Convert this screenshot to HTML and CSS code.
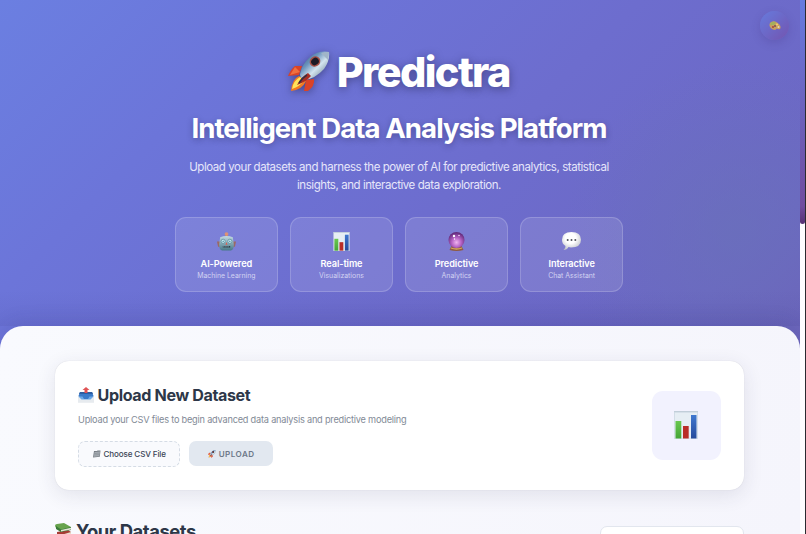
FILE: index.html
```html
<!DOCTYPE html>
<html lang="en">
<head>
<meta charset="utf-8">
<title>Predictra</title>
<link rel="stylesheet" href="styles.css">
</head>
<body>
<svg class="defs" width="0" height="0" aria-hidden="true">
  <defs>
    <linearGradient id="hull" x1="0" y1="0" x2="1" y2="1"><stop offset="0" stop-color="#34546d"/><stop offset=".35" stop-color="#6993bd"/><stop offset=".58" stop-color="#d3e4ee"/><stop offset="1" stop-color="#496579"/></linearGradient>
    <linearGradient id="green" x1="0" y1="0" x2="0" y2="1"><stop offset="0" stop-color="#6ac850"/><stop offset="1" stop-color="#45a536"/></linearGradient>
    <linearGradient id="blue" x1="0" y1="0" x2="0" y2="1"><stop offset="0" stop-color="#3f78cf"/><stop offset="1" stop-color="#264a9c"/></linearGradient>
    <radialGradient id="orb" cx=".5" cy=".65" r=".6"><stop offset="0" stop-color="#f0b4f0"/><stop offset=".5" stop-color="#b562c4"/><stop offset="1" stop-color="#642b7c"/></radialGradient>
    <radialGradient id="bubble" cx=".45" cy=".35" r=".7"><stop offset=".4" stop-color="#fff"/><stop offset="1" stop-color="#b9bcc2"/></radialGradient>
    <linearGradient id="bot" x1="0" y1="0" x2="0" y2="1"><stop offset="0" stop-color="#c3dbe3"/><stop offset="1" stop-color="#477888"/></linearGradient>
    <symbol id="rocket" viewBox="0 0 42 42">
      <path d="M14 15 7 15Q3 18 0 25L11 24ZM26 28Q27 35 20 40L16 40 18 29Z" fill="#d94327"/>
      <path d="M7 16 2 24 12 21Z" fill="#ef7040"/>
      <path d="M11 25Q4 28 3 40Q14 39 18 30Z" fill="#f27a22"/>
      <path d="M12 26Q5 30 4 38Q12 35 16 30Z" fill="#ffe45b"/>
      <path d="M41 1Q31-1 22 6Q14 13 12 23Q12 27 16 29Q27 28 36 18Q42 10 41 1Z" fill="url(#hull)"/>
      <path d="M41 1Q37 1 33 2L40 9Q41 5 41 1Z" fill="#a1b5c8"/>
      <path d="M20 22Q13 26 9 34Q18 31 23 25Z" fill="#a92e24"/>
      <path d="M19 24Q14 27 11 32" fill="none" stroke="#353143" stroke-width="1.5"/>
      <ellipse cx="27" cy="10.500" rx="5.500" ry="5" fill="#a65046" transform="rotate(-35 27 10.500)"/><ellipse cx="27" cy="10.500" rx="4" ry="3.500" fill="#1c1a25" transform="rotate(-35 27 10.500)"/>
    </symbol>
    <symbol id="chart" viewBox="0 0 24 28">
      <path d="M0 0h24v28H0Z" fill="#d2dde7"/><path d="M1 1.500h22v26H1Z" fill="#e6eef4"/><path d="M0 .7h24" stroke="#bdcbd6"/>
      <path d="M1.500 10h5.800v17.500H1.500Z" fill="url(#green)"/><path d="M9 15h5.700v12.500H9Z" fill="#b92d27"/><path d="M17 4h5.500v23.500H17Z" fill="url(#blue)"/>
    </symbol>
    <symbol id="robot" viewBox="0 0 18 18">
      <path d="M9 1v4" stroke="#b48361" stroke-width="2"/><circle cx="9" cy="2" r="1.800" fill="#dd9274"/>
      <path d="M0 9h3v5H1ZM15 9h3l-1 5h-2Z" fill="#9b6865"/>
      <path d="M3 5Q9 2.500 15 5L16 12Q16 17 13 17.500H5Q2 17 2 12Z" fill="url(#bot)"/>
      <circle cx="5.800" cy="8.700" r="1.900" fill="#dcfbff" stroke="#508595" stroke-width=".7"/><circle cx="12.200" cy="8.700" r="1.900" fill="#dcfbff" stroke="#508595" stroke-width=".7"/>
      <circle cx="5.800" cy="8.700" r=".7" fill="#397991"/><circle cx="12.200" cy="8.700" r=".7" fill="#397991"/>
      <path d="M9 9.500 8 12h2Z" fill="#e05d4e"/><path d="M5.500 14h7" stroke="#273e4b" stroke-width="1.500"/><path d="M6 14h6" stroke="#d8ebec" stroke-width=".6" stroke-dasharray="1"/>
    </symbol>
    <symbol id="crystal" viewBox="0 0 18 19">
      <path d="M4 14h10l2 4Q9 20 2 18Z" fill="#8f5b42"/><path d="M3.500 16Q9 18 14.500 16" fill="none" stroke="#d6a760" stroke-width="1.300"/>
      <circle cx="9" cy="8" r="8" fill="url(#orb)"/><circle cx="6.500" cy="4" r="1.200" fill="#fff"/><circle cx="11.500" cy="3.500" r=".8" fill="#fbd8ff"/><circle cx="7" cy="7" r=".7" fill="#fff"/>
    </symbol>
    <symbol id="speech" viewBox="0 0 19 19">
      <path d="M9.500 0Q19 0 19 7.800Q19 15.500 9 15.500L6.500 15Q5 18 1.500 18Q3.800 16 3.500 14Q0 12 0 7.800Q0 0 9.500 0Z" fill="url(#bubble)"/>
      <circle cx="5.700" cy="8" r="1" fill="#51545c"/><circle cx="9.500" cy="8" r="1" fill="#51545c"/><circle cx="13.300" cy="8" r="1" fill="#51545c"/>
    </symbol>
    <symbol id="outbox" viewBox="0 0 16 16">
      <path d="M2 5h12l2 5v5.500H0V10Z" fill="#e2e6eb"/><path d="M2 5h12l1.500 4-3 3H4L.5 9Z" fill="#397ac9"/><path d="M2 5h12l1 2H1Z" fill="#2d5da1"/>
      <path d="M0 10h4l1.500 2.500h5L12 10h4v5.500H0Z" fill="#e7ebef"/><path d="M.5 9.500h4L6 12h4l1.500-2.500h4L12.500 12.500h-9Z" fill="#6ca8e6"/>
      <path d="M8 0 11.500 3H9.500v3h-3V3h-2Z" fill="#e05455"/>
    </symbol>
    <symbol id="folder" viewBox="0 0 8 8">
      <path d="M1 1h3l.5-.5H7.500L6.800 6.800 0 7.500Z" fill="#747a82"/><path d="M1.500 2 7 1.500 6.300 6.200.8 6.800Z" fill="#a7adb3"/><path d="M1.500 3.500 6.500 3M1.200 5 6.300 4.600" stroke="#7c838a" stroke-width=".5"/>
    </symbol>
    <symbol id="books" viewBox="0 0 17 17">
      <path d="M2 9 13 7l3 2v4L6 16l-4-3Z" fill="#a63c35"/><path d="M6 12 16 9v2.500L6 14Z" fill="#eadfce"/>
      <path d="M0 3Q0 1 2 1L9 0l7 4v1L6 8 1 5Z" fill="#67a34d"/><path d="M1 3 6 6.500 16 4v3L6 9 1 6Z" fill="#397a38"/><path d="M6 7 16 4.800v1.700L6 8.500Z" fill="#e3e5d5"/>
      <path d="M1 12 6 15l10-3v3L7 18 1 14Z" fill="#3a659b"/>
    </symbol>
    <symbol id="palette" viewBox="0 0 12 10">
      <path d="M1 2Q4-1 8 1.500Q12 4 11.500 7Q11 9 9 8Q7 7 6.500 9Q3 9 1 6Q0 4 1 2Z" fill="#c99f60"/><path d="M1.500 2Q4 0 7 1.500L5 4 1 4Z" fill="#a3b15c"/>
      <circle cx="4" cy="6" r="1" fill="#a4453d"/><circle cx="8" cy="3.500" r="1" fill="#f1d071"/><circle cx="9.500" cy="6" r="1" fill="#ead9b4"/><circle cx="6" cy="5" r=".9" fill="#704850"/>
    </symbol>
  </defs>
</svg>
<div class="window">
  <div class="page">
    <button class="theme" aria-label="Theme"><svg><use href="#palette"/></svg></button>
    <header class="hero">
      <h1 class="brand"><svg><use href="#rocket"/></svg><span>Predictra</span></h1>
      <h2 class="tagline">Intelligent Data Analysis Platform</h2>
      <p class="intro">Upload your datasets and harness the power of AI for predictive analytics, statistical<br>insights, and interactive data exploration.</p>
      <div class="features">
        <div class="feature"><svg><use href="#robot"/></svg><strong>AI-Powered</strong><span>Machine Learning</span></div>
        <div class="feature"><svg><use href="#chart"/></svg><strong>Real-time</strong><span>Visualizations</span></div>
        <div class="feature"><svg><use href="#crystal"/></svg><strong>Predictive</strong><span>Analytics</span></div>
        <div class="feature"><svg><use href="#speech"/></svg><strong>Interactive</strong><span>Chat Assistant</span></div>
      </div>
    </header>
    <main class="content">
      <section class="upload">
        <div>
          <h3 class="heading"><svg><use href="#outbox"/></svg><span>Upload New Dataset</span></h3>
          <p class="hint">Upload your CSV files to begin advanced data analysis and predictive modeling</p>
          <div class="actions">
            <button class="choose"><svg><use href="#folder"/></svg><span>Choose CSV File</span></button>
            <button class="send"><svg><use href="#rocket"/></svg><span>UPLOAD</span></button>
          </div>
        </div>
        <div class="preview"><svg><use href="#chart"/></svg></div>
      </section>
      <section class="datasets">
        <h3 class="heading datasets-title"><svg><use href="#books"/></svg><span>Your Datasets</span></h3>
        <div class="search"></div>
      </section>
    </main>
  </div>
  <div class="scroll"><div class="thumb"></div></div>
  <div class="edge"></div>
</div>
</body>
</html>
```
FILE: styles.css
```css
* { box-sizing: border-box; }
body { margin: 0; font-family: Inter, "Liberation Sans", sans-serif; overflow: hidden; }
h1, h2, h3, p { margin: 0; }
button { font-family: inherit; padding: 0; }
svg { display: block; flex: none; }
.defs { position: absolute; }
.window { display: flex; width: 806px; height: 534px; overflow: hidden; }
.page { position: relative; width: 800px; height: 534px; overflow: hidden; background: radial-gradient(circle at 735px 230px, rgba(105,114,184,.6), transparent 170px), linear-gradient(135deg, #6b7fe1 0, #6c75d9 22%, #6d6dce 48%, #6c67c3 75%, #6c5cb0 100%); }
.hero { height: 326px; padding-top: 47px; display: flex; flex-direction: column; align-items: center; color: #fff; padding-right: 2px; background: linear-gradient(transparent 290px, rgba(60,60,140,.1)); }
.brand { display: flex; align-items: center; gap: 6.500px; height: 50px; font-size: 41.4px; line-height: 50px; font-weight: 800; letter-spacing: -1.600px; text-shadow: 0 2px 8px rgba(30,30,70,.5); }
.brand svg { width: 42px; height: 42px; margin-top: -1px; filter: drop-shadow(0 2px 4px rgba(30,30,70,.5)); }
.tagline { margin-top: 14px; height: 34px; font-size: 27.6px; line-height: 34px; font-weight: 700; letter-spacing: -.96px; text-shadow: 0 2px 6px rgba(30,30,70,.35); white-space: nowrap; }
.intro { margin-top: 13px; text-align: center; font-size: 11.5px; line-height: 18.4px; letter-spacing: -.44px; color: #e6e6fa; white-space: nowrap; }
.features { display: grid; grid-template-columns: repeat(4, 103.600px); gap: 11.500px; margin-top: 22.500px; }
.feature { height: 75px; padding-top: 14px; display: flex; flex-direction: column; align-items: center; border: 1px solid rgba(255,255,255,.18); border-radius: 11px; background: rgba(255,255,255,.11); white-space: nowrap; }
.feature svg { width: 19px; height: 19px; }
.feature strong { margin-top: 7px; font-size: 9.200px; line-height: 12px; font-weight: 600; letter-spacing: -.08px; }
.feature span { font-size: 6.900px; line-height: 11px; color: #d3d3f2; }
.content { height: 208px; padding: 35px 56px 0 55px; border-radius: 23px 23px 0 0; background: linear-gradient(100deg, #f9fafe, #f5f5fc); box-shadow: 0 -6px 18px rgba(40,40,110,.1); }
.upload { display: flex; justify-content: space-between; align-items: center; height: 129px; padding: 0 23.500px 0 23px; background: #fff; border-radius: 14px; box-shadow: 0 5px 20px rgba(50,50,80,.11), 0 0 1px rgba(50,50,80,.2); }
.heading { display: flex; align-items: center; gap: 3.500px; font-size: 16.100px; line-height: 20px; font-weight: 700; letter-spacing: -.37px; color: #2d3748; }
.heading svg { width: 16px; height: 16px; }
.hint { margin-top: 8px; font-size: 9.200px; line-height: 14px; letter-spacing: -.21px; color: #828a96; white-space: nowrap; }
.actions { display: flex; align-items: center; gap: 9px; margin-top: 14px; }
.choose, .send { display: flex; align-items: center; justify-content: center; gap: 3px; border-radius: 7px; font-size: 8.050px; }
.choose { width: 102.400px; height: 26px; border: 1px dashed #d5dce5; background: #f9fafd; font-weight: 500; letter-spacing: -.12px; color: #3b4555; }
.send { width: 83.500px; height: 25px; border: 0; background: #e2e8f0; color: #6d7889; font-weight: 600; letter-spacing: .5px; }
.choose svg, .send svg { width: 8px; height: 8px; }
.preview { display: grid; place-items: center; width: 69px; height: 69px; border-radius: 11px; background: #f2f2fe; }
.preview svg { width: 24px; height: 28px; margin-top: -1px; margin-right: 1px; }
.datasets { display: flex; justify-content: space-between; margin-top: 30px; }
.datasets-title { height: 22px; gap: 4px; font-size: 18.400px; line-height: 22px; letter-spacing: -.45px; }
.datasets-title svg { width: 17px; height: 17px; }
.search { width: 144px; height: 30px; margin-top: 6px; border: 1px solid #e2e6ee; border-radius: 7px; background: #fff; }
.theme { position: absolute; top: 11px; left: 760px; width: 29px; height: 29px; display: grid; place-items: center; border: 0; border-radius: 50%; background: linear-gradient(135deg, #667bdd, #7354b0); box-shadow: 0 3px 8px rgba(70,50,130,.25); }
.theme svg { width: 12px; height: 10px; }
.scroll { width: 5px; background: #fdfdff; }
.thumb { height: 224px; border-radius: 0 0 3px 3px; background: linear-gradient(#667be0, #704b9f 92%, #563173); }
.edge { width: 1px; background: #2b2b30; }
```
